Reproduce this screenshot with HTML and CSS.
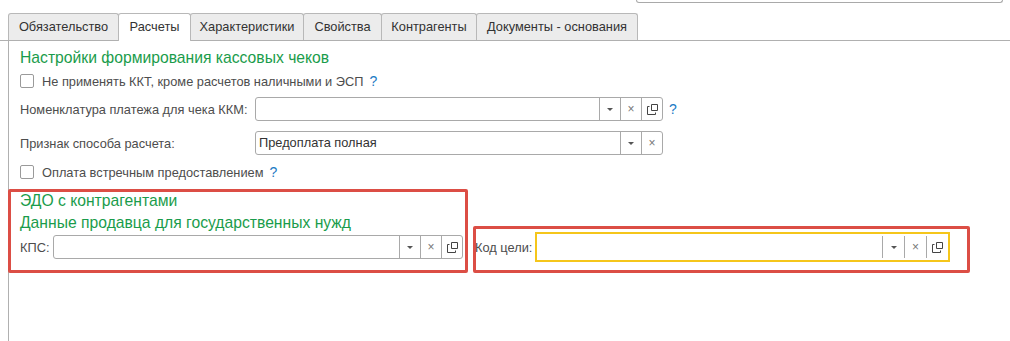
FILE: index.html
```html
<!DOCTYPE html>
<html lang="ru">
<head>
    <meta charset="UTF-8">
    <title>Расчеты</title>
    <link rel="stylesheet" href="styles.css">
</head>
<body>

    <div class="top-field"></div>

    <div class="tabs">
        <div class="tab t1">Обязательство</div>
        <div class="tab t2 active">Расчеты</div>
        <div class="tab t3">Характеристики</div>
        <div class="tab t4">Свойства</div>
        <div class="tab t5">Контрагенты</div>
        <div class="tab t6">Документы - основания</div>
    </div>

    <div class="panel">
        <div class="group-title first">Настройки формирования кассовых чеков</div>

        <label class="check-row">
            <span class="checkbox"></span>
            <span>Не применять ККТ, кроме расчетов наличными и ЭСП</span>
            <span class="hint">?</span>
        </label>

        <div class="field-row row-nom">
            <span class="label wide">Номенклатура платежа для чека ККМ:</span>
            <div class="input w408">
                <span class="value"></span>
                <span class="btn"><span class="arrow"></span></span>
                <span class="btn"><span class="cross">×</span></span>
                <span class="btn"><svg width="11" height="11" viewBox="0 0 11 11"><path d="M4.5 0.5h6v6h-6z M2.5 2.5h-2v8h8v-2" fill="none" stroke="#444" stroke-width="1"/></svg></span>
            </div>
            <span class="hint">?</span>
        </div>

        <div class="field-row row-sign">
            <span class="label wide">Признак способа расчета:</span>
            <div class="input w408">
                <span class="value">Предоплата полная</span>
                <span class="btn"><span class="arrow"></span></span>
                <span class="btn"><span class="cross">×</span></span>
            </div>
        </div>

        <label class="check-row second">
            <span class="checkbox"></span>
            <span>Оплата встречным предоставлением</span>
            <span class="hint">?</span>
        </label>

        <div class="marked">
            <div class="mark mark-left">
                <div class="group-title">ЭДО с контрагентами</div>
                <div class="group-title sub">Данные продавца для государственных нужд</div>
                <div class="field-row kps">
                    <span class="label">КПС:</span>
                    <div class="input grow">
                        <span class="value"></span>
                        <span class="btn"><span class="arrow"></span></span>
                        <span class="btn"><span class="cross">×</span></span>
                        <span class="btn"><svg width="11" height="11" viewBox="0 0 11 11"><path d="M4.5 0.5h6v6h-6z M2.5 2.5h-2v8h8v-2" fill="none" stroke="#444" stroke-width="1"/></svg></span>
                    </div>
                </div>
            </div>

            <div class="mark mark-right">
                <div class="field-row goal">
                    <span class="label">Код цели:</span>
                    <div class="input focused">
                        <span class="value"></span>
                        <span class="btn"><span class="arrow"></span></span>
                        <span class="btn"><span class="cross">×</span></span>
                        <span class="btn"><svg width="11" height="11" viewBox="0 0 11 11"><path d="M4.5 0.5h6v6h-6z M2.5 2.5h-2v8h8v-2" fill="none" stroke="#444" stroke-width="1"/></svg></span>
                    </div>
                </div>
            </div>
        </div>
    </div>

</body>
</html>
```

FILE: styles.css
```css
body {
    font-family: "Liberation Sans", Arial, sans-serif;
    font-size: 12.8px;
    color: #4d4d4d;
    background-color: #fff;
    margin: 0;
    padding: 0;
    height: 341px;
    overflow: hidden;
}
.top-field {
    margin-left: 636px;
    width: 367px;
    height: 3px;
    border: 1px solid #a9a9a9;
    border-top: none;
    border-radius: 0 0 3px 3px;
    box-sizing: border-box;
}
.tabs {
    display: flex;
    margin-top: 10px;
    padding-left: 8px;
    border-bottom: 1px solid #b0b0b0;
    height: 27px;
}
.tab {
    flex: none;
    height: 27px;
    line-height: 26px;
    text-align: center;
    background-color: #ececec;
    border: 1px solid #b8b8b8;
    border-bottom: none;
    border-radius: 3px 3px 0 0;
    color: #333;
    box-sizing: border-box;
    margin-right: -1px;
}
.t1 { width: 111px; }
.t2 { width: 73px; }
.t3 { width: 114px; }
.t4 { width: 79px; }
.t5 { width: 96px; }
.t6 { width: 162px; }
.tab.active {
    background-color: #fff;
    height: 28px;
    position: relative;
    z-index: 1;
}
.panel {
    margin-left: 8px;
    border-left: 1px solid #b0b0b0;
    padding-left: 11px;
    height: 300px;
}
.group-title {
    font-size: 15.7px;
    line-height: 18px;
    color: #1a9c4b;
}
.group-title.first {
    line-height: 20px;
    padding-top: 7px;
}
.group-title.sub {
    margin-top: 4px;
}
.check-row {
    display: flex;
    align-items: center;
    height: 18px;
    margin-top: 4px;
}
.check-row.second {
    margin-top: 8px;
}
.checkbox {
    width: 12px;
    height: 12px;
    border: 1px solid #9a9a9a;
    border-radius: 2px;
    margin-right: 8px;
    background-color: #fff;
}
.hint {
    color: #1b7ac4;
    font-size: 14px;
    margin-left: 6px;
}
.field-row {
    display: flex;
    align-items: center;
}
.row-nom {
    margin-top: 7px;
}
.row-sign {
    margin-top: 10px;
}
.label.wide {
    width: 235px;
}
.input {
    display: flex;
    height: 24px;
    border: 1px solid #a9a9a9;
    border-radius: 3px;
    box-sizing: border-box;
    background-color: #fff;
}
.w408 {
    width: 408px;
}
.value {
    flex: 1;
    line-height: 22px;
    padding-left: 3px;
    color: #333;
}
.btn {
    width: 20px;
    border-left: 1px solid #a9a9a9;
    display: flex;
    align-items: center;
    justify-content: center;
}
.arrow {
    width: 0;
    height: 0;
    border-left: 3px solid transparent;
    border-right: 3px solid transparent;
    border-top: 3px solid #555;
}
.cross {
    color: #777;
    font-size: 12px;
    line-height: 12px;
}
.marked {
    display: flex;
    align-items: flex-end;
    gap: 5px;
    margin-top: 8px;
    margin-left: -12px;
}
.mark {
    border: 3px solid #dc4e45;
    border-radius: 2px;
    box-sizing: border-box;
}
.mark-left {
    width: 460px;
    height: 84px;
    padding: 0 2px 0 9px;
}
.kps {
    margin-top: 3px;
}
.kps .label {
    margin-right: 4px;
}
.grow {
    flex: 1;
}
.mark-right {
    width: 497px;
    height: 47px;
    padding: 3px 17px 0 0;
}
.goal .label {
    margin-left: -1px;
    width: 60px;
}
.input.focused {
    width: 415px;
    height: 30px;
    border: 2px solid #f5c61b;
    border-radius: 0;
    padding: 2px 0;
}
.input.focused .value {
    line-height: 22px;
}
.input.focused .btn {
    width: 21px;
}
```
